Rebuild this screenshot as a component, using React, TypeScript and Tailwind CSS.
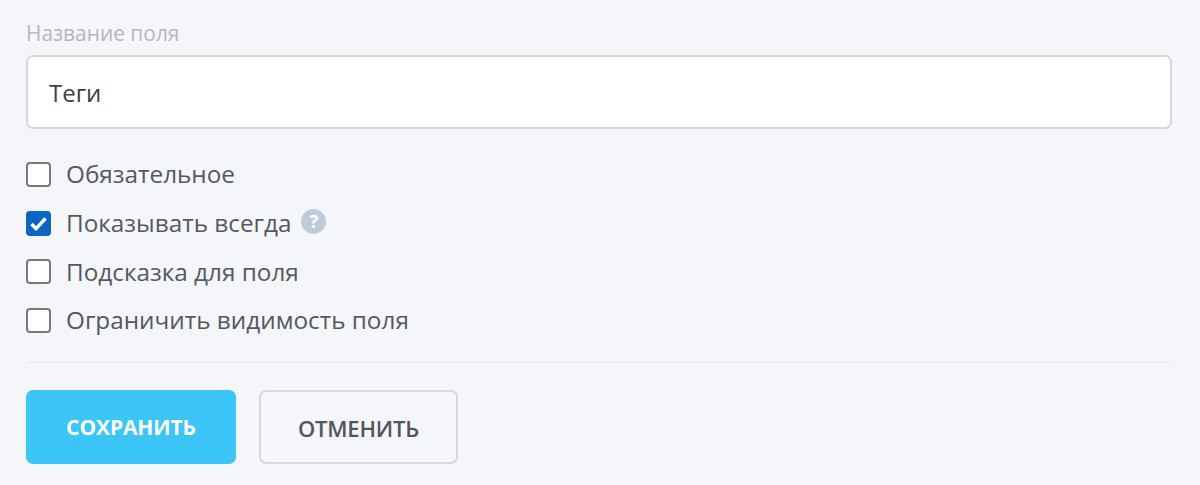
function Check({ label, checked, children }: { label: string; checked?: boolean; children?: React.ReactNode }) {
  return (
    <label className="flex items-center h-[25px]">
      {checked ? (
        <span className="w-[25px] h-[25px] rounded-[4px] bg-[#0a66c2] flex items-center justify-center">
          <svg width="21" height="21" viewBox="0 0 21 21" fill="none">
            <path d="M3.5 11l4.6 4.6L17.5 5.5" stroke="#fff" strokeWidth="3.4" />
          </svg>
        </span>
      ) : (
        <span className="w-[25px] h-[25px] rounded-[4px] border-2 border-[#75797d] bg-white" />
      )}
      <span className="ml-[15px] text-[24.3px] text-[#54595f]">{label}</span>
      {children}
    </label>
  );
}

export default function App() {
  return (
    <div className="w-[1200px] h-[485px] overflow-hidden bg-[#f5f6f9] px-[26px] pt-[19px] font-['Open_Sans',sans-serif]">
      <div className="text-[20.9px] leading-[28px] text-[#b4b8bd]">Название поля</div>
      <div className="mt-[8px] w-[1146px] h-[74px] rounded-[7px] border-2 border-[#d6d8db] bg-white flex items-center px-[21px] pt-[2px] text-[24px] text-[#3c4148]">Теги</div>
      <div className="mt-[33px] flex flex-col gap-[23.7px]">
        <Check label="Обязательное" />
        <Check label="Показывать всегда" checked>
          <span className="ml-[10px] -mt-[4px] w-[25px] h-[25px] rounded-full bg-[#c0cbd9] text-white text-[18px] font-bold flex items-center justify-center">?</span>
        </Check>
        <Check label="Подсказка для поля" />
        <Check label="Ограничить видимость поля" />
      </div>
      <div className="mt-[29px] w-[1144px] h-[1px] bg-[#e8e9ec]" />
      <div className="mt-[27px] flex gap-[23px]">
        <button className="w-[210px] h-[74px] rounded-[7px] bg-[#3bc6f7] pt-[2px] text-white text-[21px] font-bold tracking-[-0.1px]">СОХРАНИТЬ</button>
        <button className="w-[199px] h-[74px] rounded-[7px] border-2 border-[#d6d8db] pt-[2px] text-[#50565e] text-[22px] font-semibold tracking-[-0.2px]">ОТМЕНИТЬ</button>
      </div>
    </div>
  );
}
